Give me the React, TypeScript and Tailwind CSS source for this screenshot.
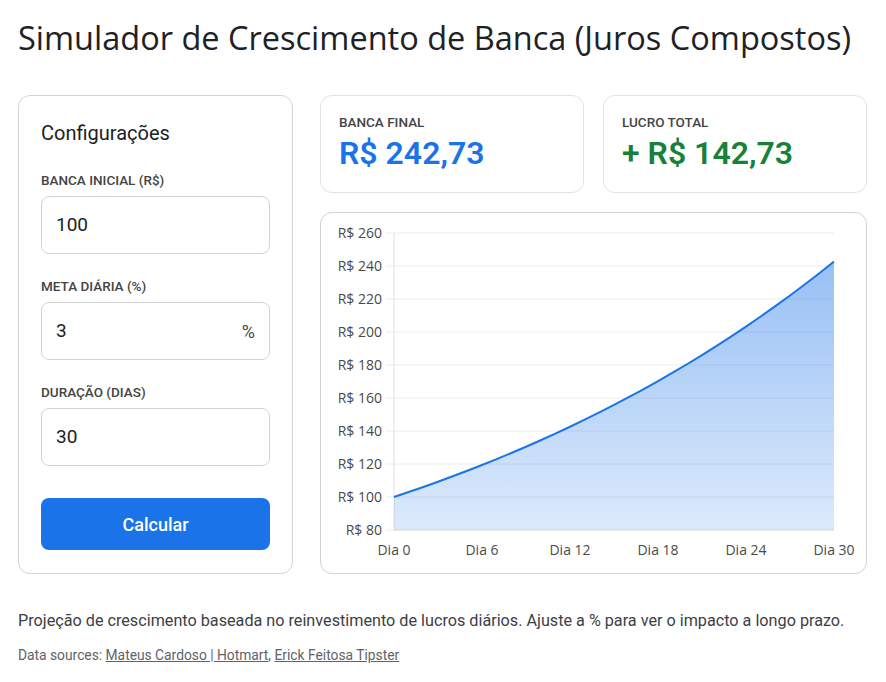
import React from "react";

const days = Array.from({ length: 31 }, (_, i) => i);
const vals = days.map((d) => 100 * Math.pow(1.03, d));
const X0 = 73, X1 = 513, Y0 = 20, Y1 = 317;
const xs = (d: number) => X0 + ((X1 - X0) * d) / 30;
const ys = (v: number) => Y1 - ((v - 80) * (Y1 - Y0)) / 180;

function Chart() {
  const line = vals.map((v, i) => `${i === 0 ? "M" : "L"}${xs(i).toFixed(2)},${ys(v).toFixed(2)}`).join(" ");
  const area = `${line} L${X1},${Y1} L${X0},${Y1} Z`;
  const ticks = [80, 100, 120, 140, 160, 180, 200, 220, 240, 260];
  const xt = [0, 6, 12, 18, 24, 30];
  return (
    <svg width="545" height="359" viewBox="0 0 545 359" style={{ fontFamily: "'Open Sans', Roboto, sans-serif" }}>
      <defs>
        <linearGradient id="g" x1="0" y1="0" x2="0" y2="1">
          <stop offset="0%" stopColor="#1a73e8" stopOpacity="0.45" />
          <stop offset="100%" stopColor="#1a73e8" stopOpacity="0.15" />
        </linearGradient>
      </defs>
      {ticks.map((t) => (
        <g key={t}>
          <line x1={X0 - 8} x2={X1} y1={ys(t)} y2={ys(t)} stroke="#ececec" strokeWidth="1" />
          <text x={61} y={ys(t) + 5} textAnchor="end" fontSize="14" fill="#4a4a4a">
            R$ {t}
          </text>
        </g>
      ))}
      <line x1={X0} x2={X0} y1={Y0} y2={Y1} stroke="#e0e0e0" />
      <path d={area} fill="url(#g)" />
      <path d={line} fill="none" stroke="#1a73e8" strokeWidth="2" />
      <line x1={X0} x2={X1} y1={Y1} y2={Y1} stroke="#dcdcdc" />
      {xt.map((d) => (
        <text key={d} x={xs(d)} y={342} textAnchor="middle" fontSize="14" fill="#4a4a4a">
          Dia {d}
        </text>
      ))}
    </svg>
  );
}

function Field({ label, value, suffix }: { label: string; value: string; suffix?: string }) {
  return (
    <div className="flex flex-col">
      <div className="text-[13.5px] font-medium text-[#444] h-[18px] leading-[18px]">{label}</div>
      <div className="mt-[7px] h-[58px] rounded-[8px] border border-[#d3d3d3] flex items-center px-[14px] text-[19px] text-[#202124]">
        <span className="flex-1">{value}</span>
        {suffix && <span className="text-[#444] text-[18px]">{suffix}</span>}
      </div>
    </div>
  );
}

export default function App() {
  return (
    <div className="bg-white w-[886px] h-[682px] px-[18px] text-[#202124]" style={{ fontFamily: "Roboto, 'Open Sans', sans-serif" }}>
      <h1 className="pt-[16px] h-[95px] text-[32.5px] leading-[44px] font-normal" style={{ fontFamily: "'Open Sans', Roboto, sans-serif" }}>
        Simulador de Crescimento de Banca (Juros Compostos)
      </h1>
      <div className="flex gap-[27px]">
        <div className="w-[275px] h-[479px] rounded-[12px] border border-[#d3d3d3] px-[22px] pt-[23px]">
          <div className="text-[20px] leading-[28px] text-[#202124]">Configurações</div>
          <div className="mt-[24px] flex flex-col gap-[23px]">
            <Field label="BANCA INICIAL (R$)" value="100" />
            <Field label="META DIÁRIA (%)" value="3" suffix="%" />
            <Field label="DURAÇÃO (DIAS)" value="30" />
          </div>
          <div className="mt-[32px] h-[52px] rounded-[8px] bg-[#1a73e8] flex items-center justify-center text-white text-[18px] font-medium">
            Calcular
          </div>
        </div>
        <div className="w-[547px] flex flex-col gap-[19px]">
          <div className="flex gap-[19px]">
            <div className="w-[264px] h-[98px] rounded-[12px] border border-[#e3e3e3] px-[18px] pt-[17px]">
              <div className="text-[13.5px] font-medium text-[#444] leading-[18px]">BANCA FINAL</div>
              <div className="mt-[3px] text-[32px] leading-[38px] font-semibold text-[#1a73e8]">R$ 242,73</div>
            </div>
            <div className="w-[264px] h-[98px] rounded-[12px] border border-[#e3e3e3] px-[18px] pt-[17px]">
              <div className="text-[13.5px] font-medium text-[#444] leading-[18px]">LUCRO TOTAL</div>
              <div className="mt-[3px] text-[32px] leading-[38px] font-semibold text-[#188038]">+ R$ 142,73</div>
            </div>
          </div>
          <div className="h-[362px] rounded-[12px] border border-[#d3d3d3] overflow-hidden">
            <Chart />
          </div>
        </div>
      </div>
      <p className="mt-[35px] text-[16.2px] leading-[24px] text-[#3c4043]">
        Projeção de crescimento baseada no reinvestimento de lucros diários. Ajuste a % para ver o impacto a longo prazo.
      </p>
      <p className="mt-[13px] text-[13.8px] leading-[18px] text-[#5f6368]">
        Data sources: <span className="underline">Mateus Cardoso | Hotmart</span>, <span className="underline">Erick Feitosa Tipster</span>
      </p>
    </div>
  );
}
